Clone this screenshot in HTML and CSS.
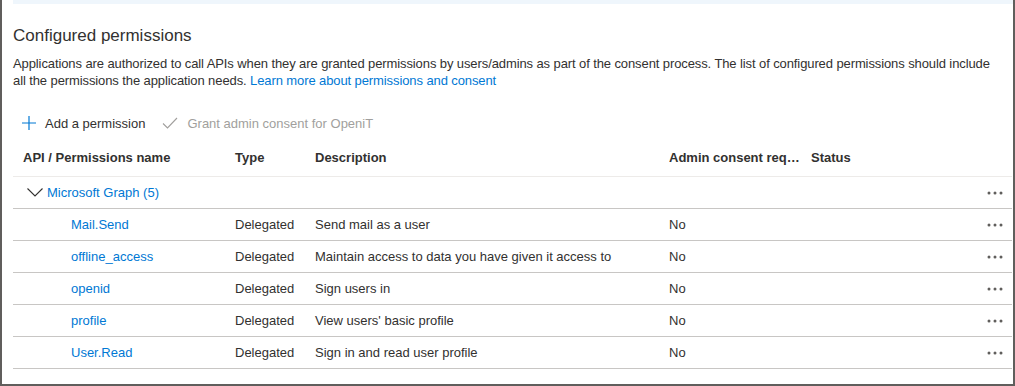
FILE: index.html
```html
<!DOCTYPE html>
<html>

<head>
	<meta charset="utf-8">
	<title>API permissions</title>
	<link rel="stylesheet" href="styles.css">
</head>

<body>
	<div class="top-band"></div>

	<h2>Configured permissions</h2>
	<p class="intro">
		Applications are authorized to call APIs when they are granted permissions by users/admins as part of the consent process. The list of configured permissions should include all the permissions the application needs.
		<a href="#">Learn more about permissions and consent</a>
	</p>

	<div class="toolbar">
		<button class="cmd">
			<svg width="14" height="14" viewBox="0 0 14 14"><path d="M7 0v14M0 7h14" stroke="#0078d4" stroke-width="1.2" fill="none" /></svg>
			Add a permission
		</button>
		<button class="cmd disabled">
			<svg width="16" height="12" viewBox="0 0 16 12"><path d="M1 6.5l4.5 4.5L15 1" stroke="#a19f9d" stroke-width="1.1" fill="none" /></svg>
			Grant admin consent for OpeniT
		</button>
	</div>

	<div class="grid">
		<div class="row head">
			<div class="cell name">API / Permissions name</div>
			<div class="cell">Type</div>
			<div class="cell">Description</div>
			<div class="cell trunc">Admin consent required</div>
			<div class="cell">Status</div>
			<div class="cell"></div>
		</div>

		<div class="row group">
			<div class="cell api">
				<svg width="16" height="9" viewBox="0 0 16 9"><path d="M0.5 0.5l7.5 7.5 7.5-7.5" stroke="#323130" stroke-width="1.1" fill="none" /></svg>
				<a href="#">Microsoft Graph (5)</a>
			</div>
			<div class="cell"></div>
			<div class="cell"></div>
			<div class="cell"></div>
			<div class="cell"></div>
			<div class="cell more"><svg width="16" height="4" viewBox="0 0 16 4"><circle cx="2" cy="2" r="1.5" /><circle cx="8" cy="2" r="1.5" /><circle cx="14" cy="2" r="1.5" /></svg></div>
		</div>

		<div class="row">
			<div class="cell perm"><a href="#">Mail.Send</a></div>
			<div class="cell">Delegated</div>
			<div class="cell">Send mail as a user</div>
			<div class="cell">No</div>
			<div class="cell"></div>
			<div class="cell more"><svg width="16" height="4" viewBox="0 0 16 4"><circle cx="2" cy="2" r="1.5" /><circle cx="8" cy="2" r="1.5" /><circle cx="14" cy="2" r="1.5" /></svg></div>
		</div>

		<div class="row">
			<div class="cell perm"><a href="#">offline_access</a></div>
			<div class="cell">Delegated</div>
			<div class="cell">Maintain access to data you have given it access to</div>
			<div class="cell">No</div>
			<div class="cell"></div>
			<div class="cell more"><svg width="16" height="4" viewBox="0 0 16 4"><circle cx="2" cy="2" r="1.5" /><circle cx="8" cy="2" r="1.5" /><circle cx="14" cy="2" r="1.5" /></svg></div>
		</div>

		<div class="row">
			<div class="cell perm"><a href="#">openid</a></div>
			<div class="cell">Delegated</div>
			<div class="cell">Sign users in</div>
			<div class="cell">No</div>
			<div class="cell"></div>
			<div class="cell more"><svg width="16" height="4" viewBox="0 0 16 4"><circle cx="2" cy="2" r="1.5" /><circle cx="8" cy="2" r="1.5" /><circle cx="14" cy="2" r="1.5" /></svg></div>
		</div>

		<div class="row">
			<div class="cell perm"><a href="#">profile</a></div>
			<div class="cell">Delegated</div>
			<div class="cell">View users' basic profile</div>
			<div class="cell">No</div>
			<div class="cell"></div>
			<div class="cell more"><svg width="16" height="4" viewBox="0 0 16 4"><circle cx="2" cy="2" r="1.5" /><circle cx="8" cy="2" r="1.5" /><circle cx="14" cy="2" r="1.5" /></svg></div>
		</div>

		<div class="row">
			<div class="cell perm"><a href="#">User.Read</a></div>
			<div class="cell">Delegated</div>
			<div class="cell">Sign in and read user profile</div>
			<div class="cell">No</div>
			<div class="cell"></div>
			<div class="cell more"><svg width="16" height="4" viewBox="0 0 16 4"><circle cx="2" cy="2" r="1.5" /><circle cx="8" cy="2" r="1.5" /><circle cx="14" cy="2" r="1.5" /></svg></div>
		</div>
	</div>
</body>

</html>
```

FILE: styles.css
```css
:root {
	--text: #323130;
	--link: #0078d4;
	--muted: #a19f9d;
	--line: #c8c6c4;
	--line-light: #edebe9;
	--frame: #605e5c;
}

html,
body {
	height: 100%;
}

body {
	margin: 0;
	box-sizing: border-box;
	padding-left: 11px;
	border: 2px solid var(--frame);
	border-top: none;
	background: #fff;
	color: var(--text);
	font: 13px/17px 'Liberation Sans', Arial, sans-serif;
	overflow: hidden;
}

a {
	color: var(--link);
	text-decoration: none;
}

.top-band {
	height: 4px;
	background: #eff6fc;
}

h2 {
	margin: 21px 0 8px;
	font-size: 17px;
	line-height: 22px;
	font-weight: normal;
}

.intro {
	margin: 0;
	padding-right: 12px;
	letter-spacing: -0.1px;
}

.toolbar {
	display: flex;
	gap: 2px;
	height: 32px;
	margin-top: 18px;
	align-items: center;
}

.cmd {
	display: flex;
	align-items: center;
	gap: 9px;
	background: none;
	border: none;
	padding: 0 6px 0 9px;
	height: 32px;
	font: inherit;
	color: var(--text);
	cursor: pointer;
}

.cmd.disabled {
	color: var(--muted);
	cursor: default;
}

.row {
	display: grid;
	grid-template-columns: 222px 80px 354px 142px 1fr 40px;
	height: 31px;
	border-bottom: 1px solid var(--line);
	align-items: center;
	margin-right: 1px;
}

.row.head {
	height: 37px;
	border-bottom-color: var(--line-light);
	font-weight: bold;
}

.cell {
	white-space: nowrap;
}

.cell.name {
	padding-left: 10px;
}

.cell.trunc {
	overflow: hidden;
	text-overflow: ellipsis;
	padding-right: 5px;
}

.cell.api {
	display: flex;
	align-items: center;
	gap: 4px;
	padding-left: 14px;
}

.cell.perm {
	padding-left: 58px;
}

.cell.more {
	display: flex;
	justify-content: flex-end;
	padding-right: 9px;
	fill: #605e5c;
}
```
